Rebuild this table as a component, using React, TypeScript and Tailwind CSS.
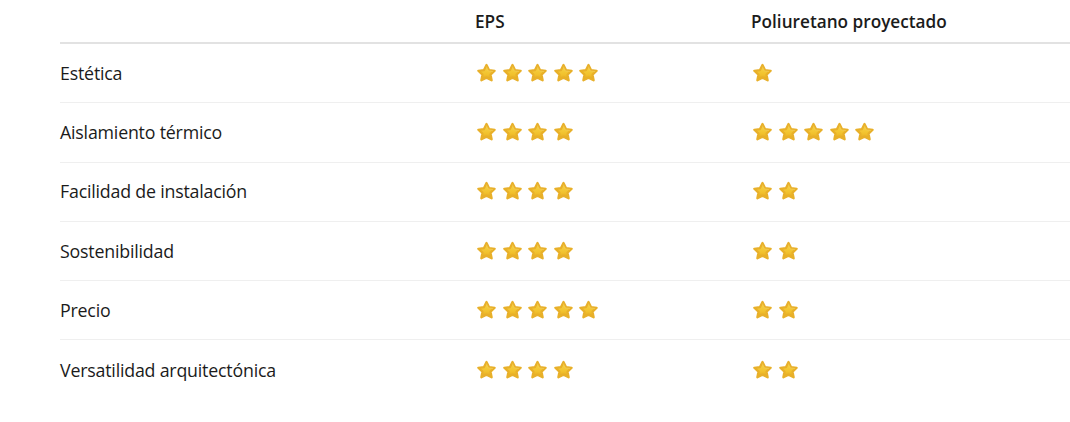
import React from "react";

const rows: { label: string; eps: number; pu: number }[] = [
  { label: "Estética", eps: 5, pu: 1 },
  { label: "Aislamiento térmico", eps: 4, pu: 5 },
  { label: "Facilidad de instalación", eps: 4, pu: 2 },
  { label: "Sostenibilidad", eps: 4, pu: 2 },
  { label: "Precio", eps: 5, pu: 2 },
  { label: "Versatilidad arquitectónica", eps: 4, pu: 2 },
];

function Star() {
  return (
    <svg viewBox="0 0 24 24" className="h-[21px] w-[21px] shrink-0">
      <defs>
        <linearGradient id="starFill" x1="0" y1="0" x2="0" y2="1">
          <stop offset="0%" stopColor="#f8d848" />
          <stop offset="65%" stopColor="#f1c02c" />
          <stop offset="100%" stopColor="#dea021" />
        </linearGradient>
      </defs>
      <path
        d="M12 2.2l2.85 5.85 6.5.85-4.7 4.45 1.2 6.45L12 16.85l-5.85 2.95 1.2-6.45-4.7-4.45 6.5-.85z"
        fill="url(#starFill)"
        stroke="#e8b02a"
        strokeWidth="2.6"
        strokeLinejoin="round"
      />
      <path
        d="M12 4.6l2.1 4.5 4.9.6"
        fill="none"
        stroke="#fbe37a"
        strokeWidth="0.8"
        strokeLinecap="round"
        opacity="0.6"
      />
    </svg>
  );
}

function Stars({ n }: { n: number }) {
  return (
    <div className="flex items-center gap-[4.5px] pl-[1px]">
      {Array.from({ length: n }).map((_, i) => (
        <Star key={i} />
      ))}
    </div>
  );
}

export default function App() {
  return (
    <div
      className="h-[422px] w-[1070px] bg-white pl-[60px] text-[#1b1b1b]"
      style={{ fontFamily: '"Open Sans", "Noto Sans", sans-serif' }}
    >
      {/* Header */}
      <div className="grid h-[44px] grid-cols-[415px_276px_1fr] items-center border-b-2 border-[#e2e2e2] pt-[2px] text-[17.2px] font-semibold">
        <div />
        <div>EPS</div>
        <div>Poliuretano proyectado</div>
      </div>

      {/* Rows */}
      {rows.map((r, i) => (
        <div
          key={r.label}
          className={`grid h-[59.3px] grid-cols-[415px_276px_1fr] items-center text-[17.8px] ${
            i < rows.length - 1 ? "border-b border-[#efefef]" : ""
          }`}
        >
          <div className="tracking-[-0.2px]">{r.label}</div>
          <Stars n={r.eps} />
          <Stars n={r.pu} />
        </div>
      ))}
    </div>
  );
}
